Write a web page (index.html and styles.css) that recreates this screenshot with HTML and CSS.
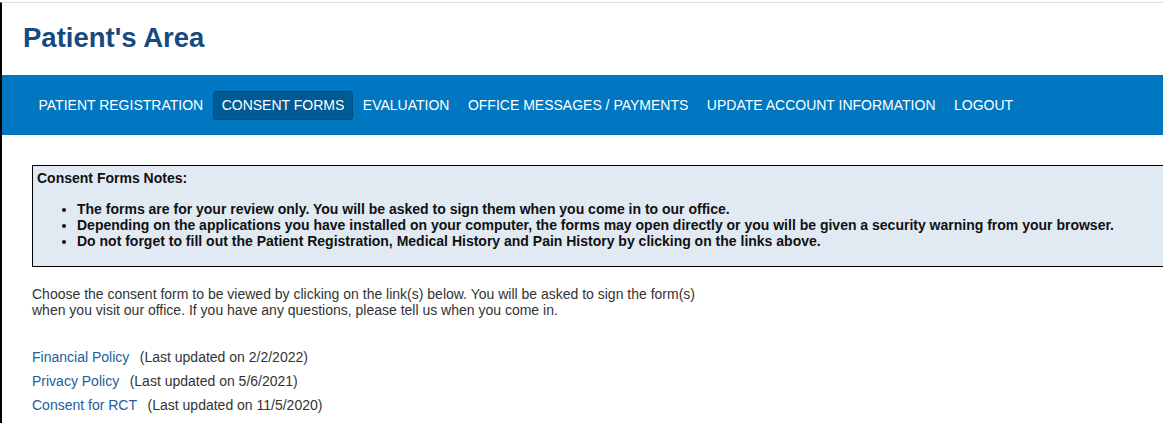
FILE: index.html
```html
<!DOCTYPE html>
<html lang="en">
<head>
<meta charset="utf-8">
<title>Patient's Area</title>
<link rel="stylesheet" href="styles.css">
</head>
<body>
<div class="page">
  <header class="header">
    <h1 class="title">Patient's Area</h1>
  </header>
  <nav class="nav">
    <a class="nav-item" href="#">PATIENT REGISTRATION</a>
    <a class="nav-item active" href="#">CONSENT FORMS</a>
    <a class="nav-item" href="#">EVALUATION</a>
    <a class="nav-item" href="#">OFFICE MESSAGES / PAYMENTS</a>
    <a class="nav-item" href="#">UPDATE ACCOUNT INFORMATION</a>
    <a class="nav-item" href="#">LOGOUT</a>
  </nav>
  <main class="content">
    <div class="notes">
      <div class="notes-title">Consent Forms Notes:</div>
      <ul class="notes-list">
        <li>The forms are for your review only. You will be asked to sign them when you come in to our office.</li>
        <li>Depending on the applications you have installed on your computer, the forms may open directly or you will be given a security warning from your browser.</li>
        <li>Do not forget to fill out the Patient Registration, Medical History and Pain History by clicking on the links above.</li>
      </ul>
    </div>
    <p class="intro">Choose the consent form to be viewed by clicking on the link(s) below. You will be asked to sign the form(s)<br>when you visit our office. If you have any questions, please tell us when you come in.</p>
    <div class="links">
      <div class="link-row"><a class="form-link" href="#">Financial Policy</a><span class="updated">(Last updated on 2/2/2022)</span></div>
      <div class="link-row"><a class="form-link" href="#">Privacy Policy</a><span class="updated">(Last updated on 5/6/2021)</span></div>
      <div class="link-row"><a class="form-link" href="#">Consent for RCT</a><span class="updated">(Last updated on 11/5/2020)</span></div>
    </div>
  </main>
</div>
</body>
</html>
```

FILE: styles.css
```css
html, body {
  margin: 0;
  padding: 0;
  background: #ffffff;
}

body {
  font-family: "Liberation Sans", Arial, Helvetica, sans-serif;
  font-size: 14px;
  color: #333333;
  overflow: hidden;
}

.page {
  margin-top: 2px;
  border-top: 1px solid #dcdcdc;
  border-left: 2px solid #000000;
  min-height: 430px;
  overflow: hidden;
}

.header {
  height: 72px;
  box-sizing: border-box;
  padding: 19px 0 0 21px;
}

.title {
  margin: 0;
  font-size: 27.5px;
  line-height: 32px;
  font-weight: bold;
  color: #164a80;
}

.nav {
  height: 60px;
  background: #0077c0;
  display: flex;
  align-items: center;
  gap: 1.5px;
  padding-left: 28px;
}

.nav-item {
  display: block;
  padding: 0 7.5px;
  line-height: 27px;
  border: 1px solid transparent;
  border-radius: 3px;
  color: #ffffff;
  text-decoration: none;
  font-size: 14px;
  white-space: nowrap;
}

.nav-item.active {
  background: #005a93;
  border-color: #004d7e;
}

.content {
  padding: 30px 0 0 30px;
}

.notes {
  width: 1150px;
  border: 1px solid #000000;
  background: #e1e9f2;
  padding: 4px 4px 3px;
  font-weight: bold;
  font-size: 14px;
  color: #111111;
}

.notes-list {
  margin: 15px 0 14px;
  padding-left: 40px;
}

.intro {
  margin: 19px 0 0;
  color: #333333;
}

.links {
  margin-top: 26.5px;
}

.link-row {
  height: 24px;
  line-height: 24px;
}

.form-link {
  color: #225d9b;
  text-decoration: none;
}

.updated {
  margin-left: 10.5px;
  color: #333333;
}
```
